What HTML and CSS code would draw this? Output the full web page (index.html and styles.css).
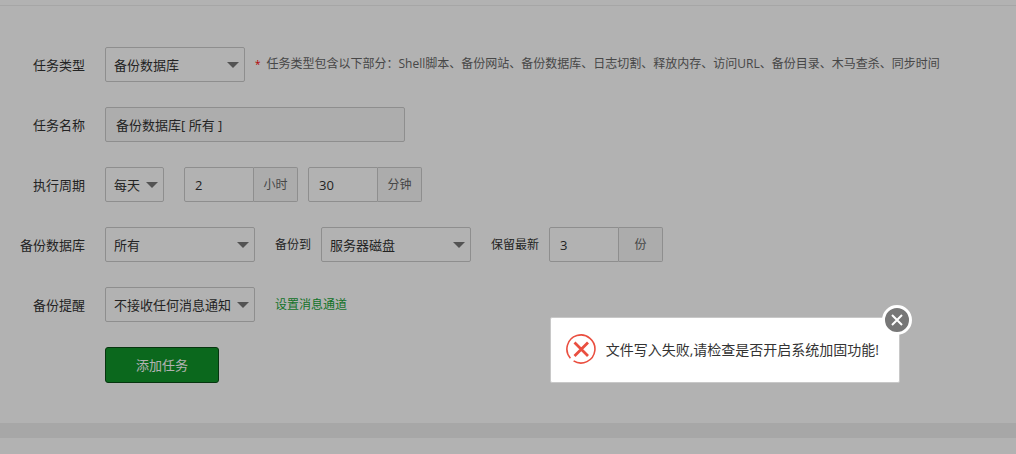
FILE: index.html
```html
<!DOCTYPE html>
<html lang="zh-CN">
<head>
    <meta charset="UTF-8" />
    <meta name="viewport" content="width=device-width, initial-scale=1.0" />
    <title>计划任务</title>
    <link rel="stylesheet" href="styles.css">
</head>
<body>
    <main class="panel">
        <form class="task-form">
            <div class="row">
                <label class="row-label" for="task-type">任务类型</label>
                <div class="select type-select">
                    <select id="task-type"><option>备份数据库</option></select>
                </div>
                <p class="tip"><span class="star">*</span>任务类型包含以下部分：Shell脚本、备份网站、备份数据库、日志切割、释放内存、访问URL、备份目录、木马查杀、同步时间</p>
            </div>
            <div class="row">
                <label class="row-label" for="task-name">任务名称</label>
                <input class="name-input" id="task-name" type="text" value="备份数据库[ 所有 ]" readonly>
            </div>
            <div class="row">
                <label class="row-label" for="cycle">执行周期</label>
                <div class="select cycle-select">
                    <select id="cycle"><option>每天</option></select>
                </div>
                <div class="group spaced">
                    <input id="hour" type="text" value="2">
                    <label class="unit" for="hour">小时</label>
                </div>
                <div class="group">
                    <input id="minute" type="text" value="30">
                    <label class="unit" for="minute">分钟</label>
                </div>
            </div>
            <div class="row">
                <label class="row-label" for="database">备份数据库</label>
                <div class="select">
                    <select id="database"><option>所有</option></select>
                </div>
                <label class="sub-label" for="target">备份到</label>
                <div class="select">
                    <select id="target"><option>服务器磁盘</option></select>
                </div>
                <label class="sub-label" for="keep">保留最新</label>
                <div class="group">
                    <input id="keep" type="text" value="3">
                    <label class="unit" for="keep">份</label>
                </div>
            </div>
            <div class="row">
                <label class="row-label" for="notice">备份提醒</label>
                <div class="select">
                    <select id="notice"><option>不接收任何消息通知</option></select>
                </div>
                <a class="channel-link" href="#">设置消息通道</a>
            </div>
            <div class="row">
                <span class="row-label"></span>
                <button type="submit" class="submit-btn">添加任务</button>
            </div>
        </form>
    </main>
    <section class="panel"></section>

    <div class="shade"></div>
    <div class="message" role="alertdialog" aria-labelledby="message-text">
        <svg class="error-icon" viewBox="0 0 30 30" fill="none" stroke="#ea4f40">
            <path d="M4.4 24.2A14 14 0 1 1 7.6 26.9" stroke-width="1.6"/>
            <path d="M8.5 8.5L22 22M22 8.5L8.5 22" stroke-width="2.8"/>
        </svg>
        <p id="message-text">文件写入失败,请检查是否开启系统加固功能!</p>
        <button type="button" class="close-btn" aria-label="关闭">
            <svg viewBox="0 0 24 24" fill="none" stroke="#fff" stroke-width="2">
                <path d="M7 7L17 17M17 7L7 17"/>
            </svg>
        </button>
    </div>
</body>
</html>
```
FILE: styles.css
```css
* {
    box-sizing: border-box;
}

body {
    margin: 0;
    padding-top: 5px;
    background-color: #fff;
    color: #333;
    font-family: "Open Sans", "Noto Sans CJK SC", sans-serif;
    font-size: 13px;
}

input,
select,
button {
    font: inherit;
    color: inherit;
}

p {
    margin: 0;
}

.panel {
    border-top: 1px solid #eee;
}

.panel + .panel {
    border-top: 15px solid #f0f0f0;
}

.task-form {
    display: flex;
    flex-direction: column;
    gap: 25px;
    padding: 41px 0 40px;
}

.row {
    display: flex;
    align-items: center;
}

.row-label {
    width: 85px;
    margin-right: 20px;
    padding-bottom: 1px;
    text-align: right;
    white-space: nowrap;
}

.select {
    position: relative;
    width: 150px;
}

.type-select {
    width: 140px;
}

.cycle-select {
    width: 59px;
}

.select::after {
    content: "";
    position: absolute;
    top: 15px;
    right: 6px;
    border: 6px solid transparent;
    border-top-color: #777;
    border-bottom: 0;
    pointer-events: none;
}

.select select {
    appearance: none;
    display: block;
    width: 100%;
    height: 35px;
    padding: 0 0 0 8px;
    border: 1px solid #ccc;
    border-radius: 2px;
    background-color: #fff;
}

.row input {
    height: 35px;
    padding: 0 10px;
    border: 1px solid #ccc;
    border-radius: 2px;
    background-color: #fff;
}

.row .name-input {
    width: 300px;
    background-color: #f8f8f8;
}

.tip {
    margin-left: 10px;
    padding-bottom: 3px;
    color: #666;
    font-size: 12px;
    white-space: nowrap;
}

.star {
    margin-right: 6px;
    color: red;
    font-size: 10px;
}

.group {
    display: flex;
    margin-right: 10px;
}

.spaced {
    margin-left: 20px;
}

.row .group input {
    width: 70px;
    border-radius: 2px 0 0 2px;
}

.unit {
    width: 44px;
    border: 1px solid #ccc;
    border-left: 0;
    border-radius: 0 2px 2px 0;
    background-color: #f6f6f6;
    color: #666;
    font-size: 12px;
    line-height: 33px;
    text-align: center;
}

.sub-label {
    margin: 0 10px 0 20px;
    padding-bottom: 2px;
    font-size: 12px;
}

.channel-link {
    margin-left: 20px;
    padding-bottom: 2px;
    color: #20a53a;
    font-size: 12px;
    text-decoration: none;
}

.submit-btn {
    height: 36px;
    padding: 0 30px 2px;
    border: 1px solid #0a4d16;
    border-radius: 3px;
    background-color: #10952a;
    color: #fff;
    cursor: pointer;
}

.shade {
    position: fixed;
    inset: 0;
    background-color: rgba(0, 0, 0, 0.3);
}

.message {
    position: fixed;
    top: 317px;
    right: 116px;
    display: flex;
    align-items: center;
    gap: 10px;
    padding: 16px 20px 18px 15px;
    border: 1px solid #c8c8c8;
    border-radius: 2px;
    background-color: #fff;
    font-size: 14px;
}

.error-icon {
    width: 30px;
    height: 30px;
}

.close-btn {
    position: absolute;
    top: -13px;
    right: -13px;
    width: 30px;
    height: 30px;
    padding: 0;
    border: 3px solid #fff;
    border-radius: 50%;
    background-color: #777;
    cursor: pointer;
}

.close-btn svg {
    display: block;
}
```
